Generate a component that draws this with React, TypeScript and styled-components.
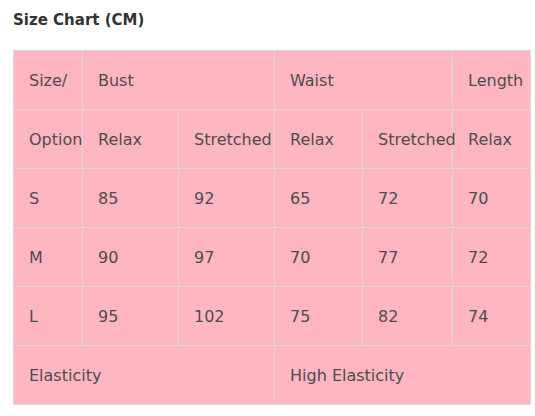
import React from 'react';
import styled, { createGlobalStyle } from 'styled-components';

const GlobalStyle = createGlobalStyle`
  html, body {
    margin: 0;
    padding: 0;
    background: #ffffff;
  }
  body {
    font-family: 'DejaVu Sans', 'Liberation Sans', sans-serif;
  }
`;

const widths = [69, 96, 96, 88, 90, 78];

const rows = [
  ['S', '85', '92', '65', '72', '70'],
  ['M', '90', '97', '70', '77', '72'],
  ['L', '95', '102', '75', '82', '74'],
];

function App() {
  return (
    <Wrapper>
      <GlobalStyle />
      <Title>Size Chart (CM)</Title>
      <ChartTable>
        <colgroup>
          {widths.map((w, i) => (
            <col key={i} style={{ width: w }} />
          ))}
        </colgroup>
        <tbody>
          <tr>
            <Cell>Size/</Cell>
            <Cell colSpan={2}>Bust</Cell>
            <Cell colSpan={2}>Waist</Cell>
            <Cell>Length</Cell>
          </tr>
          <tr>
            <Cell>Option</Cell>
            <Cell>Relax</Cell>
            <Cell>Stretched</Cell>
            <Cell>Relax</Cell>
            <Cell>Stretched</Cell>
            <Cell>Relax</Cell>
          </tr>
          {rows.map((r) => (
            <tr key={r[0]}>
              {r.map((v, i) => (
                <Cell key={i}>{v}</Cell>
              ))}
            </tr>
          ))}
          <tr>
            <Cell colSpan={3}>Elasticity</Cell>
            <Cell colSpan={3}>High Elasticity</Cell>
          </tr>
        </tbody>
      </ChartTable>
    </Wrapper>
  );
}

const Wrapper = styled.div`
  padding: 12px 13px 0;
`;

const Title = styled.h3`
  margin: 0 0 21px;
  font-size: 15px;
  font-weight: bold;
  line-height: 17px;
  color: #333333;
`;

const ChartTable = styled.table`
  table-layout: fixed;
  border-collapse: collapse;
  width: 518px;
  background-color: #ffb6c1;
`;

const Cell = styled.td`
  height: 58px;
  padding: 0 0 0 15px;
  border: 1px solid #d9d9d9;
  font-size: 16px;
  color: #4d4d4d;
  white-space: nowrap;
  overflow: visible;
  vertical-align: middle;
`;

export default App;
